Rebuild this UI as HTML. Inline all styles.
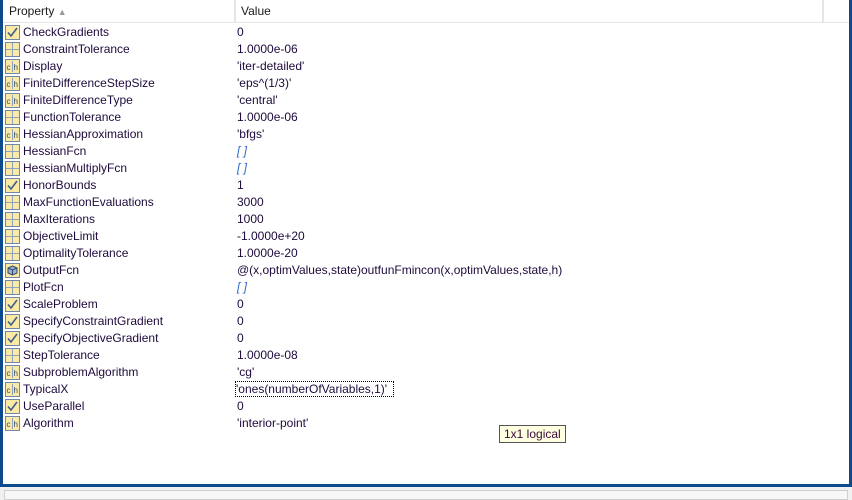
<!DOCTYPE html>
<html><head><style>
body{margin:0;width:852px;height:496px;background:#f0f0f0;position:relative;overflow:hidden;font-family:"Liberation Sans",sans-serif;font-size:12px;color:#1e0a3c}
#frame{position:absolute;left:0;top:0;width:846px;height:484px;background:#fff;border-left:3px solid #0e4a8c;border-right:3px solid #0e4a8c;border-bottom:3px solid #0e4a8c}
#hdr{position:absolute;left:0;top:0;width:846px;height:22px;border-bottom:1px solid #e6e6e6;background:#fff}
.hc{position:absolute;top:0;height:22px;line-height:22px;color:#1a1a1a}
.vd{position:absolute;top:0;width:2px;height:22px;background:#e6e6e6}
.row{position:absolute;left:0;height:17px;line-height:17px;width:846px;margin-top:1px}
.row svg{position:absolute;left:2px;top:1px}
.n{position:absolute;left:20px}
.v{position:absolute;left:234px;white-space:pre}
.e{font-style:italic;color:#2a6ac8}
#bot{position:absolute;left:4px;top:490px;width:842px;height:8px;border:1px solid #cfcfcf;background:#f7f7f7}
</style></head><body>
<svg width="0" height="0" style="position:absolute">
<defs>
<g id="grid"><rect x="0.5" y="0.5" width="14" height="14" fill="#fbe9a6" stroke="#6f87a8"/><path d="M7.5 1V14M1 7.5H14" stroke="#8fa3bd"/></g>
<g id="chk"><rect x="0.5" y="0.5" width="14" height="14" fill="#fbe9a6" stroke="#6f87a8"/><path d="M3 7.5L6 11L12 3" stroke="#3d5f8c" stroke-width="1.6" fill="none"/></g>
<g id="ch"><rect x="0.5" y="0.5" width="14" height="14" fill="#fbe9a6" stroke="#6f87a8"/><path d="M7.5 2V13" stroke="#8fa3bd"/><text x="1.5" y="11" font-size="8" font-family="Liberation Sans" fill="#2e4a6e">c</text><text x="8.5" y="11" font-size="8" font-family="Liberation Sans" fill="#2e4a6e">h</text></g>
<g id="obj"><rect x="0.5" y="0.5" width="14" height="14" fill="#fbe9a6" stroke="#6f87a8"/><path d="M7.5 3L12 5V10L7.5 12L3 10V5Z" fill="#9fb3cf" stroke="#2e4a6e"/><path d="M3 5L7.5 7L12 5M7.5 7V12" stroke="#2e4a6e" fill="none"/></g>
</defs></svg>
<div id="frame">
<div id="hdr">
<div class="hc" style="left:6px">Property <span style="color:#999;font-size:9px">▲</span></div>
<div class="vd" style="left:231px"></div>
<div class="hc" style="left:238px">Value</div>
<div class="vd" style="left:819px"></div>
</div>
<div class="row" style="top:23px"><svg width="15" height="15"><use href="#chk"/></svg><span class="n">CheckGradients</span><span class="v">0</span></div>
<div class="row" style="top:40px"><svg width="15" height="15"><use href="#grid"/></svg><span class="n">ConstraintTolerance</span><span class="v">1.0000e-06</span></div>
<div class="row" style="top:57px"><svg width="15" height="15"><use href="#ch"/></svg><span class="n">Display</span><span class="v">'iter-detailed'</span></div>
<div class="row" style="top:74px"><svg width="15" height="15"><use href="#ch"/></svg><span class="n">FiniteDifferenceStepSize</span><span class="v">'eps^(1/3)'</span></div>
<div class="row" style="top:91px"><svg width="15" height="15"><use href="#ch"/></svg><span class="n">FiniteDifferenceType</span><span class="v">'central'</span></div>
<div class="row" style="top:108px"><svg width="15" height="15"><use href="#grid"/></svg><span class="n">FunctionTolerance</span><span class="v">1.0000e-06</span></div>
<div class="row" style="top:125px"><svg width="15" height="15"><use href="#ch"/></svg><span class="n">HessianApproximation</span><span class="v">'bfgs'</span></div>
<div class="row" style="top:142px"><svg width="15" height="15"><use href="#grid"/></svg><span class="n">HessianFcn</span><span class="v e">[ ]</span></div>
<div class="row" style="top:159px"><svg width="15" height="15"><use href="#grid"/></svg><span class="n">HessianMultiplyFcn</span><span class="v e">[ ]</span></div>
<div class="row" style="top:176px"><svg width="15" height="15"><use href="#chk"/></svg><span class="n">HonorBounds</span><span class="v">1</span></div>
<div class="row" style="top:193px"><svg width="15" height="15"><use href="#grid"/></svg><span class="n">MaxFunctionEvaluations</span><span class="v">3000</span></div>
<div class="row" style="top:210px"><svg width="15" height="15"><use href="#grid"/></svg><span class="n">MaxIterations</span><span class="v">1000</span></div>
<div class="row" style="top:227px"><svg width="15" height="15"><use href="#grid"/></svg><span class="n">ObjectiveLimit</span><span class="v">-1.0000e+20</span></div>
<div class="row" style="top:244px"><svg width="15" height="15"><use href="#grid"/></svg><span class="n">OptimalityTolerance</span><span class="v">1.0000e-20</span></div>
<div class="row" style="top:261px"><svg width="15" height="15"><use href="#obj"/></svg><span class="n">OutputFcn</span><span class="v">@(x,optimValues,state)outfunFmincon(x,optimValues,state,h)</span></div>
<div class="row" style="top:278px"><svg width="15" height="15"><use href="#grid"/></svg><span class="n">PlotFcn</span><span class="v e">[ ]</span></div>
<div class="row" style="top:295px"><svg width="15" height="15"><use href="#chk"/></svg><span class="n">ScaleProblem</span><span class="v">0</span></div>
<div class="row" style="top:312px"><svg width="15" height="15"><use href="#chk"/></svg><span class="n">SpecifyConstraintGradient</span><span class="v">0</span></div>
<div class="row" style="top:329px"><svg width="15" height="15"><use href="#chk"/></svg><span class="n">SpecifyObjectiveGradient</span><span class="v">0</span></div>
<div class="row" style="top:346px"><svg width="15" height="15"><use href="#grid"/></svg><span class="n">StepTolerance</span><span class="v">1.0000e-08</span></div>
<div class="row" style="top:363px"><svg width="15" height="15"><use href="#ch"/></svg><span class="n">SubproblemAlgorithm</span><span class="v">'cg'</span></div>
<div class="row" style="top:380px"><svg width="15" height="15"><use href="#ch"/></svg><span class="n">TypicalX</span><span class="v" style="left:233px;outline:1px dotted #000;line-height:14px;top:1px;padding-right:6px">'ones(numberOfVariables,1)'</span></div>
<div class="row" style="top:397px"><svg width="15" height="15"><use href="#chk"/></svg><span class="n">UseParallel</span><span class="v">0</span></div>
<div class="row" style="top:414px"><svg width="15" height="15"><use href="#ch"/></svg><span class="n">Algorithm</span><span class="v">'interior-point'</span></div>
<div style="position:absolute;left:496px;top:425px;height:16px;line-height:16px;padding:0 4px;border:1px solid #555;background:#ffffe1;color:#3a0a3a">1x1 logical</div>
</div>
<div id="bot"></div>
</body></html>
